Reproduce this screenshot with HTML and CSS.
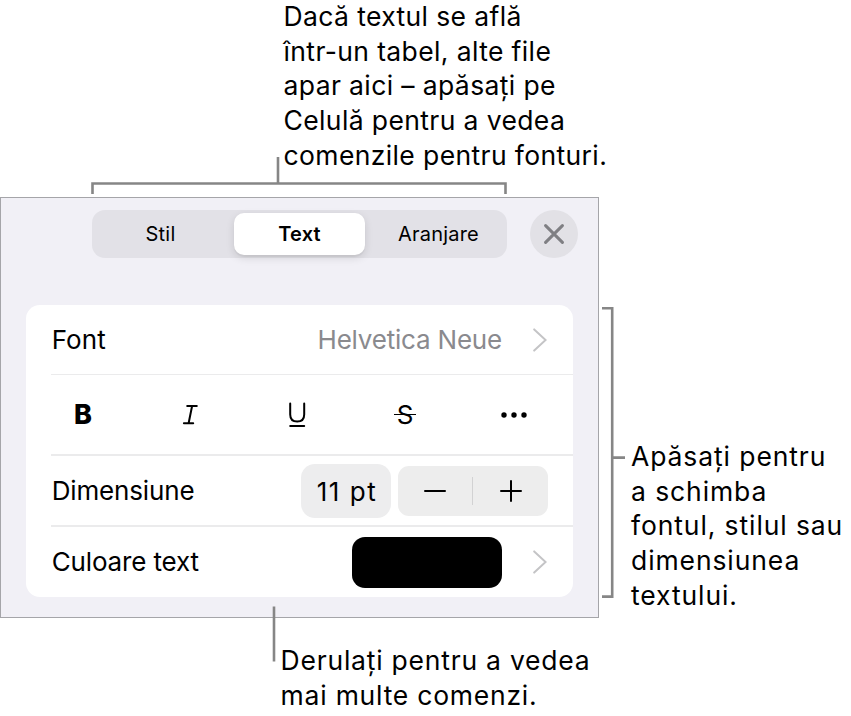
FILE: index.html
```html
<!DOCTYPE html>
<html lang="ro">
<head>
  <meta charset="UTF-8" />
  <meta name="viewport" content="width=device-width, initial-scale=1.0"/>
  <title>Comenzi text</title>
  <link rel="stylesheet" href="styles.css">
</head>
<body>
  <div class="figure">
    <p class="note note-top">Dacă textul se află<br>într-un tabel, alte file<br>apar aici – apăsați pe<br>Celulă pentru a vedea<br>comenzile pentru fonturi.</p>

    <div class="panel">
      <div class="panel-header">
        <div class="tabs">
          <button class="tab first">Stil</button>
          <button class="tab active">Text</button>
          <button class="tab last">Aranjare</button>
        </div>
        <button class="close" aria-label="Închide">
          <svg width="20" height="20" viewBox="0 0 20 20"><path d="M1.6 1.6 18.4 18.4M18.4 1.6 1.6 18.4"/></svg>
        </button>
      </div>

      <div class="card">
        <div class="row row-font">
          <span class="label">Font</span>
          <span class="value">Helvetica Neue</span>
          <svg class="chevron" width="14" height="24" viewBox="0 0 14 24"><path d="M1.2 1.4 12.6 12 1.2 22.6"/></svg>
        </div>
        <div class="row row-styles">
          <button class="style bold">B</button>
          <button class="style" aria-label="Cursiv">
            <svg width="16" height="22" viewBox="0 0 16 22"><path d="M5.2 2H14.8M1.9 19.3H11.2M10.1 2 6.6 19.3"/></svg>
          </button>
          <button class="style" aria-label="Subliniat">
            <svg width="18" height="26" viewBox="0 0 18 26"><path d="M1.2 1.4V12.6C1.2 17.2 3.8 19.6 8.2 19.6S15.2 17.2 15.2 12.6V1.4M1.2 24H15.2"/></svg>
          </button>
          <button class="style strike">S</button>
          <button class="style" aria-label="Mai multe">
            <svg class="dots" width="28" height="6" viewBox="0 0 28 6"><circle cx="5" cy="3" r="2.7"/><circle cx="15" cy="3" r="2.7"/><circle cx="25" cy="3" r="2.7"/></svg>
          </button>
        </div>
        <div class="row row-size">
          <span class="label">Dimensiune</span>
          <span class="size">11 pt</span>
          <div class="stepper">
            <button class="minus" aria-label="Micșorează"><svg width="22" height="22" viewBox="0 0 22 22"><path d="M1 11H21"/></svg></button>
            <button class="plus" aria-label="Mărește"><svg width="22" height="22" viewBox="0 0 22 22"><path d="M1 11H21M11 1V21"/></svg></button>
          </div>
        </div>
        <div class="row row-color">
          <span class="label">Culoare text</span>
          <span class="swatch"></span>
          <svg class="chevron" width="14" height="24" viewBox="0 0 14 24"><path d="M1.2 1.4 12.6 12 1.2 22.6"/></svg>
        </div>
      </div>
    </div>

    <p class="note note-side">Apăsați pentru<br>a schimba<br>fontul, stilul sau<br>dimensiunea<br>textului.</p>
    <p class="note note-bottom">Derulați pentru a vedea<br>mai multe comenzi.</p>

    <!-- leader lines from the notes to the panel -->
    <svg class="leaders" width="851" height="716" viewBox="0 0 851 716">
      <path d="M92.5 194V183.5H505.5V194M278 183V157"/>
      <path d="M602 308.2H612.2V596.6H602M612 457.6H625"/>
      <path d="M274 606.5V661.5"/>
    </svg>
  </div>
</body>
</html>
```
FILE: styles.css
```css
* {
  box-sizing: border-box;
}

body {
  margin: 0;
  background: #fff;
  font-family: Inter, "Liberation Sans", sans-serif;
  color: #000;
}

button {
  border: none;
  padding: 0;
  background: none;
  font: inherit;
  color: inherit;
}

svg {
  display: block;
  fill: none;
  stroke: #000;
  stroke-width: 2;
  stroke-linecap: round;
}

.figure {
  position: relative;
  width: 851px;
  height: 716px;
  display: grid;
  grid-template-columns: 599px 1fr;
  grid-template-rows: 197px 421px 1fr;
  overflow: hidden;
}

.note {
  font-size: 26.5px;
  line-height: 34.7px;
  white-space: nowrap;
}

.note-top {
  grid-column: 1 / 3;
  margin: -1px 0 0;
  padding-left: 283.5px;
  letter-spacing: 0.38px;
}

.note-side {
  margin: 0;
  padding: 242px 0 0 32px;
  letter-spacing: 0.9px;
}

.note-bottom {
  grid-column: 1 / 3;
  margin: 0;
  padding: 25px 0 0 280.6px;
  letter-spacing: 0.77px;
}

.panel {
  background: #f1f0f6;
  border: 1px solid #a5a5a9;
  padding: 12px 20px 0 25px;
}

.panel-header {
  display: flex;
  justify-content: space-between;
  padding-left: 66px;
}

.tabs {
  display: flex;
  width: 415px;
  height: 48px;
  padding: 3px 4px;
  border-radius: 13px;
  background: #e2e1e7;
}

.tab {
  flex: 1;
  font-size: 20px;
  letter-spacing: 0.2px;
}

.tab.first {
  padding-right: 9px;
}

.tab.last {
  padding-left: 9px;
}

.tab.active {
  flex: 0 0 131px;
  background: #fff;
  border-radius: 10px;
  font-weight: 600;
  box-shadow: 0 3px 8px rgba(0,0,0,0.12), 0 2px 1px rgba(0,0,0,0.04);
}

.close {
  width: 48px;
  height: 48px;
  border-radius: 50%;
  background: #e2e1e6;
  display: flex;
  align-items: center;
  justify-content: center;
}

.close svg {
  stroke: #7f7f83;
  stroke-width: 3;
}

.card {
  width: 547px;
  height: 292px;
  margin-top: 47px;
  background: #fff;
  border-radius: 14px;
}

.row {
  display: flex;
  align-items: center;
  margin-left: 25px;
  padding-right: 26px;
  border-bottom: 2px solid #ebebec;
}

.row-font {
  height: 70px;
  border-bottom-width: 1px;
}

.row-styles {
  height: 81px;
}

.row-size {
  height: 71px;
  padding-right: 25px;
}

.row-color {
  height: 70px;
  border-bottom: none;
}

.label {
  flex: 1;
  padding-left: 0.7px;
  font-size: 26px;
  letter-spacing: -0.15px;
}

.row-font .label {
  letter-spacing: 0.1px;
}

.row-color .label {
  margin-top: -2px;
}

.value {
  font-size: 26px;
  letter-spacing: -0.2px;
  color: #8a8a8e;
}

.chevron {
  margin-left: 31px;
  stroke: #c4c4c6;
}

.style {
  flex: none;
  width: 64px;
  height: 64px;
  margin-right: 43.4px;
  display: flex;
  align-items: center;
  justify-content: center;
  font-size: 27px;
}

.style:last-child {
  margin-right: 0;
}

.bold {
  font-weight: 800;
}

.strike {
  position: relative;
  font-size: 26px;
}

/* the line is wider than the letter */
.strike::after {
  content: "";
  position: absolute;
  top: 31px;
  left: 21px;
  width: 22px;
  height: 1px;
  background: #000;
}

.dots {
  fill: #000;
  stroke: none;
}

.size {
  width: 90px;
  height: 54px;
  padding-left: 2px;
  border-radius: 14px;
  background: #ededee;
  font-size: 26px;
  line-height: 56px;
  letter-spacing: 1.5px;
  text-align: center;
}

.stepper {
  display: flex;
  width: 150px;
  height: 50px;
  margin-left: 7px;
  border-radius: 11px;
  background: #ededed;
}

.stepper button {
  display: flex;
  align-items: center;
}

.minus {
  width: 74px;
  justify-content: center;
}

.plus::before {
  content: "";
  width: 1px;
  height: 28px;
  margin-right: 27px;
  background: #d2d2d3;
}

.swatch {
  width: 150px;
  height: 51px;
  border-radius: 13px;
  background: #000;
}

.leaders {
  position: absolute;
  top: 0;
  left: 0;
  stroke: #868686;
  stroke-width: 2.6;
  stroke-linecap: butt;
}
```
